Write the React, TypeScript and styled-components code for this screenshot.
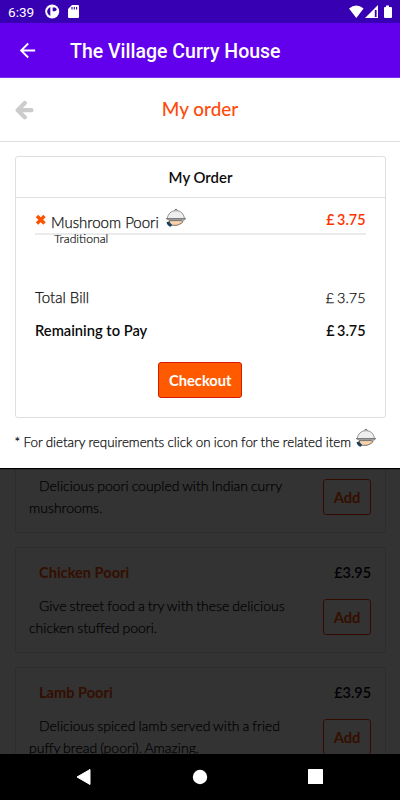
import React from "react";
import styled, { createGlobalStyle } from "styled-components";

const Global = createGlobalStyle`
  *, *::before, *::after { box-sizing: border-box; }
  body { margin: 0; background: #000; }
`;

const Screen = styled.div`
  width: 400px;
  height: 800px;
  overflow: hidden;
  display: flex;
  flex-direction: column;
  background: #fff;
  color: #0c0c0c;
  font-family: Lato, "Open Sans", sans-serif;
  font-size: 15px;
`;

const StatusBar = styled.div`
  flex: 0 0 23px;
  display: flex;
  align-items: center;
  justify-content: space-between;
  padding: 0 7px 0 8px;
  background: #3700b3;
  color: #fff;
  font: 400 13.6px/23px Roboto, sans-serif;
`;

const StatusGroup = styled.div`
  display: flex;
  align-items: center;
  height: 23px;
`;

const Clock = styled.span`
  width: 37px;
  padding-top: 1px;
`;

const AppBar = styled.header`
  flex: 0 0 55px;
  display: flex;
  align-items: center;
  padding: 1px 0 0 16px;
  background: #6200ee;
  border-bottom: 1px solid #7a2bef;
  color: #fff;
`;

const AppTitle = styled.h1`
  margin: 2px 0 0 31px;
  font: 500 19.5px/24px Roboto, sans-serif;
  white-space: nowrap;
`;

const Content = styled.main`
  position: relative;
  flex: 1;
  min-height: 0;
  overflow: hidden;
`;

const MenuList = styled.div`
  display: flex;
  flex-direction: column;
  gap: 14px;
  padding: 348.6px 14px 0 15px;
`;

const MenuCard = styled.article`
  flex: 0 0 106.3px;
  display: flex;
  justify-content: space-between;
  border: 1px solid #dededf;
  padding: 14.3px 14px 0 13px;
`;

const DishInfo = styled.div`
  white-space: nowrap;
`;

const DishName = styled.h3`
  margin: 0 0 11px 10px;
  font: 700 14.6px/22px Lato, sans-serif;
  color: #ff4a00;
`;

const DishText = styled.p`
  margin: 0;
  text-indent: 10px;
  white-space: pre-line;
  font-size: 14px;
  font-weight: 300;
  -webkit-text-stroke: 0.25px;
  word-spacing: -0.8px;
  line-height: 22px;
`;

const DishSide = styled.div`
  display: flex;
  flex-direction: column;
  align-items: flex-end;
`;

const DishPrice = styled.span`
  margin-bottom: 15px;
  font: 600 14.4px/22px Lato, sans-serif;
`;

const AddButton = styled.button`
  width: 48px;
  height: 36px;
  padding: 0;
  border: 1px solid #ff3a00;
  border-radius: 3px;
  background: transparent;
  color: #ff4a00;
  font: 700 14.7px/34px Lato, sans-serif;
`;

const Backdrop = styled.div`
  position: absolute;
  inset: 0;
  background: rgba(0, 0, 0, 0.8);
`;

const Dialog = styled.section`
  height: 390px;
  background: #fff;
  box-shadow: 0 1px 1px #000;
`;

const DialogHeader = styled.header`
  height: 64px;
  display: grid;
  grid-template-columns: 60px 1fr 60px;
  align-items: center;
  padding-left: 15px;
  padding-right: 15px;
  border-bottom: 1px solid #dededf;
`;

const DialogTitle = styled.h2`
  margin: -2px 0 0;
  text-align: center;
  font: 500 18.9px/24px Lato, sans-serif;
  color: #ff4a0a;
`;

const OrderCard = styled.div`
  height: 262px;
  margin: 14px 14px 0 15px;
  border: 1px solid #dfdfe0;
  border-radius: 3px;
`;

const OrderHeading = styled.h3`
  height: 41px;
  margin: 0;
  border-bottom: 1px solid #dfdfe0;
  text-align: center;
  font: 600 14.9px/40px Lato, sans-serif;
`;

const OrderBody = styled.div`
  padding: 0 19.5px 0 19px;
`;

const OrderLine = styled.div`
  display: flex;
  justify-content: space-between;
  height: 37px;
  border-bottom: 2px solid #ebebeb;
`;

const OrderItem = styled.div`
  display: flex;
  align-items: flex-start;
  white-space: nowrap;
`;

const ItemName = styled.span`
  width: 107px;
  margin: 13px 7px 0 4px;
  font-size: 15px;
  font-weight: 300;
  -webkit-text-stroke: 0.25px;
  line-height: 22px;
`;

const RemoveIcon = styled.svg`
  width: 12px;
  height: 12px;
  margin-top: 16px;
`;

const LinePrice = styled.span`
  margin-top: 11px;
  font-size: 14.4px;
  font-weight: 600;
  word-spacing: -1px;
  line-height: 22px;
  color: #ff3200;
`;

const ItemNote = styled.div`
  height: 51px;
  padding-left: 19px;
  font-size: 12.2px;
  font-weight: 300;
  -webkit-text-stroke: 0.2px;
  line-height: 8px;
`;

const TotalRow = styled.div<{ $strong?: boolean }>`
  display: flex;
  justify-content: space-between;
  height: 33px;
  line-height: 23px;
  font-size: ${(p) => (p.$strong ? 14.7 : 15)}px;
  font-weight: ${(p) => (p.$strong ? 600 : 300)};
  -webkit-text-stroke: ${(p) => (p.$strong ? 0 : 0.25)}px;
`;

const TotalAmount = styled.span`
  font-size: 14.4px;
  line-height: 24px;
  word-spacing: -1px;
`;

const CheckoutButton = styled.button`
  display: block;
  width: 84px;
  height: 36px;
  margin: 10px auto 0;
  padding: 0;
  border: 1px solid #d31b00;
  border-radius: 3px;
  background: #ff5a00;
  color: #fff;
  font: 700 14.7px/34px Lato, sans-serif;
`;

const Footnote = styled.p`
  display: flex;
  align-items: flex-start;
  gap: 4px;
  margin: 16px 0 0 14.5px;
  font-size: 13.4px;
  font-weight: 300;
  -webkit-text-stroke: 0.25px;
  word-spacing: -0.35px;
  line-height: 16px;
  white-space: nowrap;
`;

const Cloche = styled.svg<{ $top: number }>`
  width: 22px;
  height: 20px;
  margin-top: ${(p) => p.$top}px;
`;

const NavBar = styled.nav`
  flex: 0 0 46.5px;
  display: flex;
  align-items: center;
  justify-content: space-between;
  padding: 0 76px;
  background: #000;
`;

const ServingIcon = ({ top }: { top: number }) => (
  <Cloche $top={top} viewBox="0 0 22 20">
    <path d="M1.5 14.2l3-1 3.2 3.2-2 2.4Q2.4 17.8 1.5 14.2z" fill="#173f62" />
    <path d="M4.5 12.6h11.7l1.8.9-1.5 1.8-4.5 2H7.5l-2.8-2.4z" fill="#f7d2ae" stroke="#473b32" strokeWidth=".7" />
    <path d="M2.3 10.5C3 5.7 6.2 2.7 11 2.7s7.7 3 8.5 7.8z" fill="#eee" stroke="#666" strokeWidth=".7" />
    <path d="M9.8 2.5a1.2 1.2 0 1 1 2.4 0" fill="#ddd" stroke="#444" strokeWidth=".7" />
    <path d="M1 10.5h20l-2 1.7H4z" fill="#a8a8a8" stroke="#666" strokeWidth=".6" />
  </Cloche>
);

const dishes = [
  { name: "Mushroom Poori", price: "£3.95", text: "Delicious poori coupled with Indian curry\nmushrooms." },
  { name: "Chicken Poori", price: "£3.95", text: "Give street food a try with these delicious\nchicken stuffed poori." },
  { name: "Lamb Poori", price: "£3.95", text: "Delicious spiced lamb served with a fried\npuffy bread (poori). Amazing." },
];

export default function App() {
  return (
    <Screen>
      <Global />
      <StatusBar>
        <StatusGroup>
          <Clock>6:39</Clock>
          <svg width="15" height="15" viewBox="0 0 15 15">
            <circle cx="7.2" cy="7.5" r="7" fill="#fff" />
            <path d="M5.3 3Q2.2 4.6 2.2 7.5t3.1 4.5z" fill="#3700b3" />
            <path d="M7.6 3.4h2a1.9 1.9 0 0 1 0 3.9h-2z" fill="#3700b3" />
          </svg>
          <svg width="20" height="15" viewBox="0 0 20 15">
            <path d="M12 1h6q1 0 1 1v11q0 1-1 1h-9q-1 0-1-1V5z" fill="#fff" />
            <path d="M12 3v2.5M14.3 3v2.5M16.6 3v2.5" stroke="#3700b3" strokeWidth="1.1" />
          </svg>
        </StatusGroup>
        <StatusGroup>
          <svg width="44" height="14" viewBox="0 0 44 14">
            <path d="M0 3.5Q7.3-2.3 14.6 3.5L7.3 13z" fill="#fff" />
            <path d="M16 13L29 0v13z" fill="#fff" />
            <path d="M25.8 5h1.8v7h-1.8z" fill="#3700b3" />
            <path d="M37 .5h3V2h2q1 0 1 1v9q0 1-1 1h-6q-1 0-1-1V3q0-1 1-1h1z" fill="#fff" />
          </svg>
        </StatusGroup>
      </StatusBar>
      <AppBar>
        <svg width="23" height="23" viewBox="0 0 24 24">
          <path d="M20 11H7.8l5.6-5.6L12 4l-8 8 8 8 1.4-1.4L7.8 13H20z" fill="#fff" />
        </svg>
        <AppTitle>The Village Curry House</AppTitle>
      </AppBar>
      <Content>
        <MenuList>
          {dishes.map((dish) => (
            <MenuCard key={dish.name}>
              <DishInfo>
                <DishName>{dish.name}</DishName>
                <DishText>{dish.text}</DishText>
              </DishInfo>
              <DishSide>
                <DishPrice>{dish.price}</DishPrice>
                <AddButton>Add</AddButton>
              </DishSide>
            </MenuCard>
          ))}
        </MenuList>
        <Backdrop>
          <Dialog>
            <DialogHeader>
              <svg width="20" height="20" viewBox="0 0 20 20">
                <path d="M9.8 3L2.7 10.2l7.1 7.1M3.5 10.2H16.5" fill="none" stroke="#ccc" strokeWidth="4.2" strokeLinecap="round" strokeLinejoin="round" />
              </svg>
              <DialogTitle>My order</DialogTitle>
            </DialogHeader>
            <OrderCard>
              <OrderHeading>My Order</OrderHeading>
              <OrderBody>
                <OrderLine>
                  <OrderItem>
                    <RemoveIcon viewBox="0 0 12 12">
                      <path d="M2 2l7.5 7.5M9.5 2L2 9.5" stroke="#ff5200" strokeWidth="3.4" />
                    </RemoveIcon>
                    <ItemName>Mushroom Poori</ItemName>
                    <ServingIcon top={10} />
                  </OrderItem>
                  <LinePrice>£ 3.75</LinePrice>
                </OrderLine>
                <ItemNote>Traditional</ItemNote>
                <TotalRow>
                  <span>Total Bill</span>
                  <TotalAmount>£ 3.75</TotalAmount>
                </TotalRow>
                <TotalRow $strong>
                  <span>Remaining to Pay</span>
                  <TotalAmount>£ 3.75</TotalAmount>
                </TotalRow>
                <CheckoutButton>Checkout</CheckoutButton>
              </OrderBody>
            </OrderCard>
            <Footnote>
              <span>* For dietary requirements click on icon for the related item</span>
              <ServingIcon top={-6} />
            </Footnote>
          </Dialog>
        </Backdrop>
      </Content>
      <NavBar>
        <svg width="16" height="18" viewBox="0 0 16 18">
          <path d="M1 9L14 1.5v15z" fill="#fff" stroke="#fff" strokeLinejoin="round" />
        </svg>
        <svg width="16" height="16" viewBox="0 0 16 16">
          <circle cx="8" cy="8" r="7.2" fill="#fff" />
        </svg>
        <svg width="16" height="16" viewBox="0 0 16 16">
          <rect width="15" height="15" rx=".6" fill="#fff" />
        </svg>
      </NavBar>
    </Screen>
  );
}
